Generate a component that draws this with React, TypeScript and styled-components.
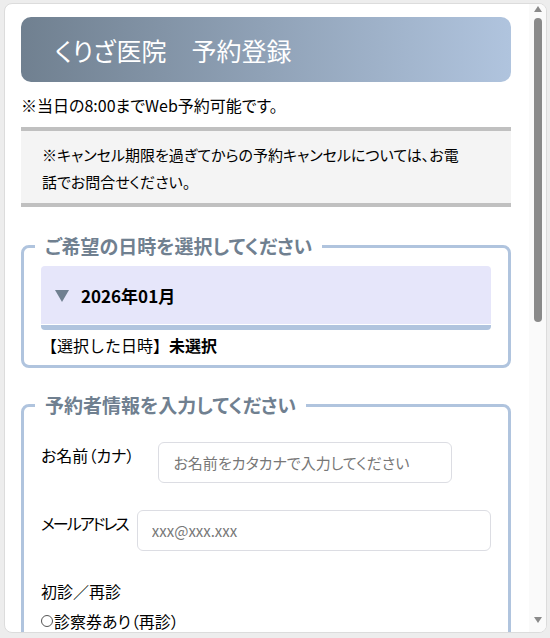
import React from 'react';
import styled, { createGlobalStyle } from 'styled-components';

const GlobalStyle = createGlobalStyle`
  html, body {
    margin: 0;
    height: 100%;
    overflow: hidden;
  }
  body {
    background: #ededed;
    font-family: "Noto Sans CJK JP", "Noto Sans", sans-serif;
    font-feature-settings: "palt";
    color: #000;
  }
  * {
    box-sizing: border-box;
  }
`;

const Window = styled.div`
  margin: 3px 3px 0 4px;
  height: 630px;
  display: flex;
  background: #fff;
  border: 1px solid #dcdcdc;
  border-radius: 8px;
  overflow: hidden;
`;

const Page = styled.main`
  flex: 1;
  min-width: 0;
  padding: 13px 18px 0 16px;
  overflow: hidden;
`;

const Header = styled.header`
  height: 65px;
  display: flex;
  align-items: center;
  padding-left: 34px;
  border-radius: 10px;
  background: linear-gradient(90deg, #708090, #b0c4de);
  color: #fff;
  font-size: 25px;
  font-weight: 400;
`;

const Note = styled.p`
  margin: 10px 0 9px;
  font-size: 16px;
  line-height: 26px;
`;

const CancelBox = styled.div`
  border-top: 4px solid #c0c0c0;
  border-bottom: 4px solid #c0c0c0;
  background: #f4f4f4;
  padding: 10px 48px 8px 21px;
  font-size: 15px;
  line-height: 27px;
`;

const Section = styled.fieldset<{ $gap: number; $top: number }>`
  margin: ${(p) => p.$gap}px 0 0;
  padding: ${(p) => p.$top}px 17px 7px 17px;
  border: 3px solid #b0c4de;
  border-radius: 8px;
  min-width: 0;
`;

const Legend = styled.legend`
  margin-left: -6px;
  padding: 0 10px;
  font-size: 19px;
  line-height: 26px;
  font-weight: 700;
  color: #708090;
`;

const MonthBar = styled.div`
  height: 64px;
  display: flex;
  align-items: center;
  gap: 12px;
  padding-left: 14px;
  background: #e6e6fa;
  border-bottom: 5px solid #b0c4de;
  border-radius: 4px;
  box-shadow: inset 0 -1px 0 #fff;
  font-size: 17px;
  font-weight: 700;
  cursor: pointer;
`;

const Caret = styled.span`
  width: 0;
  height: 0;
  border-left: 7.5px solid transparent;
  border-right: 7.5px solid transparent;
  border-top: 12px solid #708090;
`;

const Selected = styled.div`
  margin-top: 2px;
  font-size: 16px;
  line-height: 26px;
  font-feature-settings: normal;
  b {
    font-weight: 700;
  }
`;

const Row = styled.div`
  display: flex;
  align-items: flex-start;
  margin-bottom: 27px;
`;

const Label = styled.label<{ $tight?: boolean }>`
  font-size: 16px;
  line-height: 26px;
  white-space: nowrap;
  letter-spacing: ${(p) => (p.$tight ? '-2px' : '0')};
`;

const TextInput = styled.input<{ $gap: number; $width?: number }>`
  margin-left: ${(p) => p.$gap}px;
  ${(p) => (p.$width ? `width: ${p.$width}px;` : 'flex: 1; min-width: 0;')}
  height: 41px;
  padding: 0 14px;
  border: 1px solid #dcdde3;
  border-radius: 6px;
  font: inherit;
  font-size: 15px;
  color: #000;
  outline: none;
  &::placeholder {
    color: #777;
  }
`;

const GroupTitle = styled.div`
  margin-top: 26px;
  font-size: 16px;
  line-height: 26px;
`;

const Option = styled.label`
  display: flex;
  align-items: center;
  margin-top: 6px;
  font-size: 16px;
  line-height: 22px;
`;

const Radio = styled.input`
  appearance: none;
  width: 12px;
  height: 12px;
  margin: 0 1px 0 0;
  border: 1.3px solid #555;
  border-radius: 50%;
  background: #fff;
`;

const Scrollbar = styled.div`
  width: 17px;
  flex-shrink: 0;
  display: flex;
  flex-direction: column;
  align-items: center;
  background: #fafafa;
  padding: 2px 0 9px;
`;

const Arrow = styled.span<{ $down?: boolean }>`
  width: 0;
  height: 0;
  border-left: 4.5px solid transparent;
  border-right: 4.5px solid transparent;
  ${(p) => (p.$down ? 'border-top: 6px solid #8a8a8a;' : 'border-bottom: 6px solid #8a8a8a;')}
`;

const Thumb = styled.div`
  width: 8px;
  height: 304px;
  margin-top: 6px;
  border-radius: 4px;
  background: #8a8a8a;
`;

const Spacer = styled.div`
  flex: 1;
`;

export default function App() {
  return (
    <>
      <GlobalStyle />
      <Window>
        <Page>
          <Header>くりざ医院　予約登録</Header>
          <Note>※当日の8:00までWeb予約可能です。</Note>
          <CancelBox>
            ※キャンセル期限を過ぎてからの予約キャンセルについては、お電話でお問合せください。
          </CancelBox>

          <Section $gap={26} $top={7}>
            <Legend>ご希望の日時を選択してください</Legend>
            <MonthBar>
              <Caret />
              2026年01月
            </MonthBar>
            <Selected>
              【選択した日時】<b>未選択</b>
            </Selected>
          </Section>

          <Section $gap={24} $top={24}>
            <Legend>予約者情報を入力してください</Legend>
            <Row>
              <Label htmlFor="kana">お名前（カナ）</Label>
              <TextInput id="kana" $gap={24} $width={294} placeholder="お名前をカタカナで入力してください" />
            </Row>
            <Row>
              <Label htmlFor="mail" $tight>メールアドレス</Label>
              <TextInput id="mail" $gap={9} type="email" placeholder="xxx@xxx.xxx" />
            </Row>
            <GroupTitle>初診／再診</GroupTitle>
            <Option>
              <Radio type="radio" name="visit" />
              診察券あり（再診）
            </Option>
          </Section>
        </Page>
        <Scrollbar>
          <Arrow />
          <Thumb />
          <Spacer />
          <Arrow $down />
        </Scrollbar>
      </Window>
    </>
  );
}
